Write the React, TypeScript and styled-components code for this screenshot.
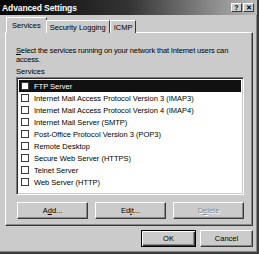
import React from 'react';
import styled, { createGlobalStyle } from 'styled-components';

const GlobalStyle = createGlobalStyle`
  html, body { margin: 0; padding: 0; background: #cbcbcb; }
  body { font-family: "Liberation Sans", Arial, sans-serif; font-size: 7px; color: #000; }
`;

const services = [
  'FTP Server',
  'Internet Mail Access Protocol Version 3 (IMAP3)',
  'Internet Mail Access Protocol Version 4 (IMAP4)',
  'Internet Mail Server (SMTP)',
  'Post-Office Protocol Version 3 (POP3)',
  'Remote Desktop',
  'Secure Web Server (HTTPS)',
  'Telnet Server',
  'Web Server (HTTP)',
];

const Window = styled.div`
  width: 259px;
  height: 254px;
  box-sizing: border-box;
  background: #cbcbcb;
  border-right: 2px solid #3a3a3a;
  border-bottom: 2px solid #3a3a3a;
  box-shadow: inset -1px -1px 0 #878787;
  display: flex;
  flex-direction: column;
`;

const TitleBar = styled.div`
  height: 15px;
  display: flex;
  align-items: center;
  padding: 0 3px 0 2px;
  background: linear-gradient(to right, #050505 0%, #333 50%, #b9b9b9 100%);
`;

const Title = styled.div`
  flex: 1;
  color: #fff;
  font-weight: bold;
  font-size: 8.5px;
  letter-spacing: -0.1px;
`;

const CaptionButton = styled.div<{ gap?: number }>`
  width: 11px;
  height: 9px;
  box-sizing: border-box;
  background: #cbcbcb;
  border: 1px solid;
  border-color: #fff #3a3a3a #3a3a3a #fff;
  display: flex;
  align-items: center;
  justify-content: center;
  font-size: 7px;
  font-weight: bold;
  line-height: 1;
  margin-left: ${(p) => p.gap ?? 0}px;
`;

const Body = styled.div`
  flex: 1;
  display: flex;
  flex-direction: column;
  padding: 3px 4px 0 5px;
`;

const TabStrip = styled.div`
  display: flex;
  align-items: flex-end;
  height: 15px;
  padding-left: 2px;
  margin-bottom: -1px;
  position: relative;
  z-index: 1;
`;

const Tab = styled.div<{ active?: boolean }>`
  box-sizing: border-box;
  height: ${(p) => (p.active ? 16 : 13)}px;
  padding: 0 ${(p) => (p.active ? 5 : 3)}px;
  margin: 0 ${(p) => (p.active ? -1 : 0)}px;
  display: flex;
  align-items: center;
  background: #cbcbcb;
  border-top: 1px solid #fff;
  border-left: 1px solid #fff;
  border-right: 1px solid #3a3a3a;
  border-bottom: ${(p) => (p.active ? '1px solid #cbcbcb' : 'none')};
  font-size: 7.5px;
  white-space: nowrap;
`;

const Panel = styled.div`
  height: 194px;
  box-sizing: border-box;
  border: 1px solid;
  border-color: #fff #3a3a3a #3a3a3a #fff;
  box-shadow: inset -1px -1px 0 #878787;
  padding: 13px 8px 0 10px;
  display: flex;
  flex-direction: column;
`;

const Intro = styled.p`
  margin: 0;
  line-height: 9px;
  font-size: 7.5px;
  letter-spacing: -0.15px;
`;

const Label = styled.div`
  margin-top: 3px;
  line-height: 9px;
  font-size: 7.5px;
`;

const ListBox = styled.div`
  margin-top: 1px;
  height: 118px;
  box-sizing: border-box;
  background: #fff;
  border: 1px solid;
  border-color: #7a7a7a #fff #fff #7a7a7a;
  box-shadow: inset 1px 1px 0 #2a2a2a, inset -1px -1px 0 #cbcbcb;
  padding: 2px 2px;
`;

const Row = styled.div<{ selected?: boolean }>`
  height: 12px;
  display: flex;
  align-items: center;
  gap: 5px;
  padding-left: 2px;
  background: ${(p) => (p.selected ? '#111' : 'transparent')};
  color: ${(p) => (p.selected ? '#fff' : '#000')};
  font-size: 7.5px;
  white-space: nowrap;
`;

const Check = styled.span`
  width: 8px;
  height: 8px;
  box-sizing: border-box;
  background: #fff;
  border: 1px solid #3a3a3a;
  flex: none;
`;

const ButtonRow = styled.div`
  display: flex;
  gap: 7px;
  margin-top: 7px;
  padding-left: 1px;
`;

const Button = styled.div<{ w: number; disabled?: boolean; isDefault?: boolean }>`
  width: ${(p) => p.w}px;
  height: 17px;
  box-sizing: border-box;
  background: #cbcbcb;
  border: 1px solid;
  border-color: ${(p) => (p.isDefault ? '#000' : '#fff #3a3a3a #3a3a3a #fff')};
  box-shadow: ${(p) =>
    p.isDefault
      ? 'inset 1px 1px 0 #fff, inset -1px -1px 0 #3a3a3a, inset -2px -2px 0 #878787'
      : 'inset -1px -1px 0 #878787'};
  display: flex;
  align-items: center;
  justify-content: center;
  font-size: 7.5px;
  color: ${(p) => (p.disabled ? '#8a8a8a' : '#000')};
  text-shadow: ${(p) => (p.disabled ? '1px 1px 0 #fff' : 'none')};
`;

const Footer = styled.div`
  display: flex;
  justify-content: flex-end;
  gap: 4px;
  margin-top: 4px;
`;

export default function App() {
  return (
    <>
      <GlobalStyle />
      <Window>
        <TitleBar>
          <Title>Advanced Settings</Title>
          <CaptionButton>?</CaptionButton>
          <CaptionButton gap={1}>✕</CaptionButton>
        </TitleBar>
        <Body>
          <TabStrip>
            <Tab active>Services</Tab>
            <Tab>Security Logging</Tab>
            <Tab>ICMP</Tab>
          </TabStrip>
          <Panel>
            <Intro>
              <u>S</u>elect the services running on your network that Internet users can access.
            </Intro>
            <Label>Services</Label>
            <ListBox>
              {services.map((s, i) => (
                <Row key={s} selected={i === 0}>
                  <Check />
                  {s}
                </Row>
              ))}
            </ListBox>
            <ButtonRow>
              <Button w={71}>
                A<u>d</u>d...
              </Button>
              <Button w={71}>
                Ed<u>i</u>t...
              </Button>
              <Button w={71} disabled>
                D<u>e</u>lete
              </Button>
            </ButtonRow>
          </Panel>
          <Footer>
            <Button w={55} isDefault>
              OK
            </Button>
            <Button w={53}>Cancel</Button>
          </Footer>
        </Body>
      </Window>
    </>
  );
}
